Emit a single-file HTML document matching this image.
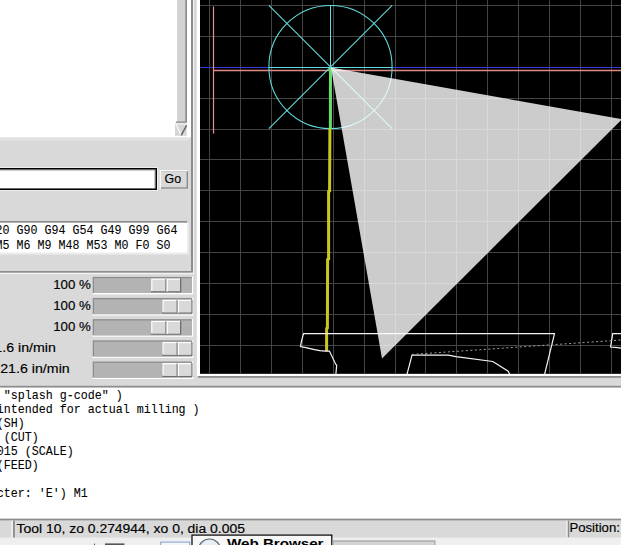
<!DOCTYPE html>
<html><head><meta charset="utf-8"><style>
html,body{margin:0;padding:0;width:621px;height:545px;overflow:hidden;background:#d9d9d9;}
svg{display:block;}
</style></head><body>
<svg width="621" height="545" viewBox="0 0 621 545">
<rect x="0" y="0" width="621" height="545" fill="#d9d9d9" />
<rect x="0" y="0" width="189" height="137.5" fill="#ffffff" />
<rect x="177" y="0" width="8.2" height="122" fill="#d3d3d3" />
<rect x="185.2" y="0" width="1.8" height="122" fill="#8c8c8c" />
<rect x="187" y="0" width="2" height="137.5" fill="#ffffff" />
<rect x="176" y="121.4" width="10.7" height="1.4" fill="#8c8c8c" />
<rect x="175" y="123" width="11.7" height="12.8" fill="#d6d6d6" />
<line x1="175.5" y1="124" x2="186.5" y2="124" stroke="#f8f8f8" stroke-width="1.0" />
<line x1="176" y1="124.2" x2="181.2" y2="135.2" stroke="#f8f8f8" stroke-width="1.2" />
<line x1="186.6" y1="125.3" x2="181.2" y2="135.3" stroke="#666" stroke-width="1.5" />
<rect x="189" y="0" width="2" height="137.5" fill="#ffffff" />
<rect x="0" y="137.5" width="189" height="3" fill="#e2e2e2" />
<rect x="191" y="0" width="2" height="272" fill="#8c8c8c" />
<rect x="193" y="0" width="1" height="274" fill="#f2f2f2" />
<rect x="0" y="271" width="193" height="1.8" fill="#8c8c8c" />
<rect x="0" y="272.8" width="194" height="1.4" fill="#f2f2f2" />
<rect x="196.8" y="0" width="3.2" height="376" fill="#ffffff" />
<rect x="197.2" y="373.8" width="423.8" height="2.2" fill="#ffffff" />
<rect x="198" y="376" width="423" height="1.8" fill="#8c8c8c" />
<rect x="0" y="385.8" width="621" height="1.9" fill="#8c8c8c" />
<rect x="0" y="167" width="158" height="24" fill="#efefef" />
<rect x="0" y="168" width="157" height="22" fill="#000" />
<rect x="0" y="169.3" width="155.7" height="19.3" fill="#9a9a9a" />
<rect x="0" y="170.5" width="154.5" height="17.6" fill="#ffffff" />
<rect x="159.7" y="170" width="28.3" height="18.7" fill="#f7f7f7" />
<rect x="161" y="171.3" width="27" height="17.4" fill="#8c8c8c" />
<rect x="161" y="171.3" width="25.6" height="16" fill="#d9d9d9" />
<text transform="translate(164.6,183.3) scale(1,1.0)" x="0" y="0" font-family="Liberation Sans" font-size="12.5" font-weight="normal" fill="#000" stroke="#000" stroke-width="0.15" text-anchor="start" textLength="16.6" lengthAdjust="spacingAndGlyphs" xml:space="preserve">Go</text>
<rect x="0" y="221" width="187" height="1.8" fill="#8c8c8c" />
<rect x="0" y="222.8" width="187" height="30" fill="#ffffff" />
<rect x="0" y="252.8" width="189" height="1.8" fill="#ececec" />
<rect x="187" y="222.8" width="2" height="30" fill="#ececec" />
<text transform="translate(-4.4,234.2) scale(1,1.1)" x="0" y="0" font-family="Liberation Mono" font-size="11.67" font-weight="normal" fill="#000" stroke="#000" stroke-width="0.08" text-anchor="start" xml:space="preserve">20 G90 G94 G54 G49 G99 G64</text>
<text transform="translate(-4.4,248.7) scale(1,1.1)" x="0" y="0" font-family="Liberation Mono" font-size="11.67" font-weight="normal" fill="#000" stroke="#000" stroke-width="0.08" text-anchor="start" xml:space="preserve">M5 M6 M9 M48 M53 M0 F0 S0</text>
<rect x="92.6" y="276.8" width="100.6" height="17.6" fill="#ffffff" />
<rect x="92.6" y="276.8" width="99.2" height="16.2" fill="#8c8c8c" />
<rect x="94" y="278.2" width="97.8" height="14.8" fill="#b3b3b3" />
<rect x="151.1" y="278.40000000000003" width="30.2" height="14.0" fill="#6e6e6e" />
<rect x="151.1" y="278.40000000000003" width="28.9" height="12.7" fill="#ffffff" />
<rect x="152.4" y="279.7" width="27.6" height="11.4" fill="#d9d9d9" />
<rect x="165.29999999999998" y="279.0" width="1.3" height="12.6" fill="#7a7a7a" />
<rect x="166.6" y="279.0" width="1.2" height="12.6" fill="#ffffff" />
<rect x="92.6" y="297.95" width="100.6" height="17.6" fill="#ffffff" />
<rect x="92.6" y="297.95" width="99.2" height="16.2" fill="#8c8c8c" />
<rect x="94" y="299.34999999999997" width="97.8" height="14.8" fill="#b3b3b3" />
<rect x="162.3" y="299.55" width="30.2" height="14.0" fill="#6e6e6e" />
<rect x="162.3" y="299.55" width="28.9" height="12.7" fill="#ffffff" />
<rect x="163.60000000000002" y="300.84999999999997" width="27.6" height="11.4" fill="#d9d9d9" />
<rect x="176.5" y="300.15" width="1.3" height="12.6" fill="#7a7a7a" />
<rect x="177.8" y="300.15" width="1.2" height="12.6" fill="#ffffff" />
<rect x="92.6" y="319.1" width="100.6" height="17.6" fill="#ffffff" />
<rect x="92.6" y="319.1" width="99.2" height="16.2" fill="#8c8c8c" />
<rect x="94" y="320.5" width="97.8" height="14.8" fill="#b3b3b3" />
<rect x="151.1" y="320.70000000000005" width="30.2" height="14.0" fill="#6e6e6e" />
<rect x="151.1" y="320.70000000000005" width="28.9" height="12.7" fill="#ffffff" />
<rect x="152.4" y="322.0" width="27.6" height="11.4" fill="#d9d9d9" />
<rect x="165.29999999999998" y="321.3" width="1.3" height="12.6" fill="#7a7a7a" />
<rect x="166.6" y="321.3" width="1.2" height="12.6" fill="#ffffff" />
<rect x="92.6" y="340.25" width="100.6" height="17.6" fill="#ffffff" />
<rect x="92.6" y="340.25" width="99.2" height="16.2" fill="#8c8c8c" />
<rect x="94" y="341.65" width="97.8" height="14.8" fill="#b3b3b3" />
<rect x="162.3" y="341.85" width="30.2" height="14.0" fill="#6e6e6e" />
<rect x="162.3" y="341.85" width="28.9" height="12.7" fill="#ffffff" />
<rect x="163.60000000000002" y="343.15" width="27.6" height="11.4" fill="#d9d9d9" />
<rect x="176.5" y="342.45" width="1.3" height="12.6" fill="#7a7a7a" />
<rect x="177.8" y="342.45" width="1.2" height="12.6" fill="#ffffff" />
<rect x="92.6" y="361.4" width="100.6" height="17.6" fill="#ffffff" />
<rect x="92.6" y="361.4" width="99.2" height="16.2" fill="#8c8c8c" />
<rect x="94" y="362.79999999999995" width="97.8" height="14.8" fill="#b3b3b3" />
<rect x="162.3" y="363.0" width="30.2" height="14.0" fill="#6e6e6e" />
<rect x="162.3" y="363.0" width="28.9" height="12.7" fill="#ffffff" />
<rect x="163.60000000000002" y="364.29999999999995" width="27.6" height="11.4" fill="#d9d9d9" />
<rect x="176.5" y="363.59999999999997" width="1.3" height="12.6" fill="#7a7a7a" />
<rect x="177.8" y="363.59999999999997" width="1.2" height="12.6" fill="#ffffff" />
<text transform="translate(90.8,289.2) scale(1,1.0)" x="0" y="0" font-family="Liberation Sans" font-size="12" font-weight="normal" fill="#000" stroke="#000" stroke-width="0.15" text-anchor="end" textLength="37.6" lengthAdjust="spacingAndGlyphs" xml:space="preserve">100 %</text>
<text transform="translate(90.8,309.9) scale(1,1.0)" x="0" y="0" font-family="Liberation Sans" font-size="12" font-weight="normal" fill="#000" stroke="#000" stroke-width="0.15" text-anchor="end" textLength="37.6" lengthAdjust="spacingAndGlyphs" xml:space="preserve">100 %</text>
<text transform="translate(90.8,331.1) scale(1,1.0)" x="0" y="0" font-family="Liberation Sans" font-size="12" font-weight="normal" fill="#000" stroke="#000" stroke-width="0.15" text-anchor="end" textLength="37.6" lengthAdjust="spacingAndGlyphs" xml:space="preserve">100 %</text>
<text transform="translate(-13.6,351.5) scale(1,1.0)" x="0" y="0" font-family="Liberation Sans" font-size="12" font-weight="normal" fill="#000" stroke="#000" stroke-width="0.15" text-anchor="start" textLength="69.5" lengthAdjust="spacingAndGlyphs" xml:space="preserve">21.6 in/min</text>
<text transform="translate(0.2,372.6) scale(1,1.0)" x="0" y="0" font-family="Liberation Sans" font-size="12" font-weight="normal" fill="#000" stroke="#000" stroke-width="0.15" text-anchor="start" textLength="69.5" lengthAdjust="spacingAndGlyphs" xml:space="preserve">21.6 in/min</text>
<rect x="0" y="387.7" width="621" height="131" fill="#ffffff" />
<text transform="translate(-3.2,399.4) scale(1,1.1)" x="0" y="0" font-family="Liberation Mono" font-size="11.67" font-weight="normal" fill="#000" stroke="#000" stroke-width="0.08" text-anchor="start" xml:space="preserve"> "splash g-code" )</text>
<text transform="translate(-3.2,413.34) scale(1,1.1)" x="0" y="0" font-family="Liberation Mono" font-size="11.67" font-weight="normal" fill="#000" stroke="#000" stroke-width="0.08" text-anchor="start" xml:space="preserve">intended for actual milling )</text>
<text transform="translate(-3.2,427.28) scale(1,1.1)" x="0" y="0" font-family="Liberation Mono" font-size="11.67" font-weight="normal" fill="#000" stroke="#000" stroke-width="0.08" text-anchor="start" xml:space="preserve">(SH)</text>
<text transform="translate(-3.2,441.21999999999997) scale(1,1.1)" x="0" y="0" font-family="Liberation Mono" font-size="11.67" font-weight="normal" fill="#000" stroke="#000" stroke-width="0.08" text-anchor="start" xml:space="preserve"> (CUT)</text>
<text transform="translate(-3.2,455.15999999999997) scale(1,1.1)" x="0" y="0" font-family="Liberation Mono" font-size="11.67" font-weight="normal" fill="#000" stroke="#000" stroke-width="0.08" text-anchor="start" xml:space="preserve">015 (SCALE)</text>
<text transform="translate(-3.2,469.09999999999997) scale(1,1.1)" x="0" y="0" font-family="Liberation Mono" font-size="11.67" font-weight="normal" fill="#000" stroke="#000" stroke-width="0.08" text-anchor="start" xml:space="preserve">(FEED)</text>
<text transform="translate(-3.2,496.97999999999996) scale(1,1.1)" x="0" y="0" font-family="Liberation Mono" font-size="11.67" font-weight="normal" fill="#000" stroke="#000" stroke-width="0.08" text-anchor="start" xml:space="preserve">cter: 'E') M1</text>
<rect x="0" y="518.7" width="621" height="1.9" fill="#8c8c8c" />
<rect x="0" y="520.6" width="621" height="17" fill="#d9d9d9" />
<rect x="11.6" y="520.6" width="1.3" height="18" fill="#ffffff" />
<rect x="12.9" y="520.6" width="1.9" height="18" fill="#8c8c8c" />
<text transform="translate(16.6,532.6) scale(1,1.0)" x="0" y="0" font-family="Liberation Sans" font-size="12" font-weight="normal" fill="#000" stroke="#000" stroke-width="0.15" text-anchor="start" textLength="228.3" lengthAdjust="spacingAndGlyphs" xml:space="preserve">Tool 10, zo 0.274944, xo 0, dia 0.005</text>
<rect x="566.5" y="520.6" width="1.2" height="17" fill="#ffffff" />
<rect x="567.7" y="520.6" width="1.6" height="17" fill="#8c8c8c" />
<text transform="translate(569.4,532.2) scale(1,1.0)" x="0" y="0" font-family="Liberation Sans" font-size="12" font-weight="normal" fill="#000" stroke="#000" stroke-width="0.15" text-anchor="start" textLength="50.5" lengthAdjust="spacingAndGlyphs" xml:space="preserve">Position:</text>
<rect x="0" y="537.6" width="621" height="7.4" fill="#efefef" />
<rect x="105" y="543.4" width="19.4" height="1.6" fill="#555" />
<rect x="94" y="543.6" width="1" height="1.4" fill="#555" />
<rect x="160.2" y="541.6" width="30" height="3.4" fill="#7fa0d0" />
<rect x="161.2" y="542.6" width="28" height="2.4" fill="#f4f4f4" />
<rect x="191.4" y="534.5" width="141" height="10.5" fill="#000" />
<rect x="192.6" y="535.7" width="138.6" height="9.3" fill="#f7f7f7" />
<circle cx="209.5" cy="550" r="11" fill="#e8eef5" stroke="#606870" stroke-width="1.2"/>
<text transform="translate(227,548.2) scale(1,1.0)" x="0" y="0" font-family="Liberation Sans" font-size="12.5" font-weight="bold" fill="#000" text-anchor="start" textLength="96.5" lengthAdjust="spacingAndGlyphs" xml:space="preserve">Web Browser</text>
<rect x="332.4" y="540.4" width="103" height="4.6" fill="#9a9a9a" />
<rect x="333.4" y="541.5" width="101" height="3.5" fill="#d4d4d4" />
<svg x="200" y="0" width="421" height="374" viewBox="200 0 421 374" overflow="hidden"><rect x="200" y="0" width="421" height="373.8" fill="#000"/><line x1="209.5" y1="0" x2="209.5" y2="373.8" stroke="#444444" stroke-width="1"/><line x1="240.5" y1="0" x2="240.5" y2="373.8" stroke="#444444" stroke-width="1"/><line x1="271.5" y1="0" x2="271.5" y2="373.8" stroke="#444444" stroke-width="1"/><line x1="302.5" y1="0" x2="302.5" y2="373.8" stroke="#444444" stroke-width="1"/><line x1="333.5" y1="0" x2="333.5" y2="373.8" stroke="#444444" stroke-width="1"/><line x1="364.5" y1="0" x2="364.5" y2="373.8" stroke="#444444" stroke-width="1"/><line x1="395.5" y1="0" x2="395.5" y2="373.8" stroke="#444444" stroke-width="1"/><line x1="425.5" y1="0" x2="425.5" y2="373.8" stroke="#444444" stroke-width="1"/><line x1="456.5" y1="0" x2="456.5" y2="373.8" stroke="#444444" stroke-width="1"/><line x1="487.5" y1="0" x2="487.5" y2="373.8" stroke="#444444" stroke-width="1"/><line x1="518.5" y1="0" x2="518.5" y2="373.8" stroke="#444444" stroke-width="1"/><line x1="549.5" y1="0" x2="549.5" y2="373.8" stroke="#444444" stroke-width="1"/><line x1="580.5" y1="0" x2="580.5" y2="373.8" stroke="#444444" stroke-width="1"/><line x1="611.5" y1="0" x2="611.5" y2="373.8" stroke="#444444" stroke-width="1"/><line x1="200" y1="5.5" x2="621" y2="5.5" stroke="#444444" stroke-width="1"/><line x1="200" y1="36.5" x2="621" y2="36.5" stroke="#444444" stroke-width="1"/><line x1="200" y1="67.5" x2="621" y2="67.5" stroke="#444444" stroke-width="1"/><line x1="200" y1="98.5" x2="621" y2="98.5" stroke="#444444" stroke-width="1"/><line x1="200" y1="129.5" x2="621" y2="129.5" stroke="#444444" stroke-width="1"/><line x1="200" y1="159.5" x2="621" y2="159.5" stroke="#444444" stroke-width="1"/><line x1="200" y1="190.5" x2="621" y2="190.5" stroke="#444444" stroke-width="1"/><line x1="200" y1="221.5" x2="621" y2="221.5" stroke="#444444" stroke-width="1"/><line x1="200" y1="252.5" x2="621" y2="252.5" stroke="#444444" stroke-width="1"/><line x1="200" y1="283.5" x2="621" y2="283.5" stroke="#444444" stroke-width="1"/><line x1="200" y1="314.5" x2="621" y2="314.5" stroke="#444444" stroke-width="1"/><line x1="200" y1="345.5" x2="621" y2="345.5" stroke="#444444" stroke-width="1"/><line x1="200" y1="67.5" x2="621" y2="67.5" stroke="#3a3ae0" stroke-width="1.2"/><line x1="213.5" y1="70.5" x2="621" y2="70.5" stroke="#e08888" stroke-width="1.3"/><line x1="213.5" y1="6.5" x2="213.5" y2="133.6" stroke="#e89090" stroke-width="1.2"/><circle cx="330.5" cy="67" r="61.6" fill="none" stroke="#60dede" stroke-width="1.05"/><line x1="268.9" y1="67.5" x2="392.1" y2="67.5" stroke="#60dede" stroke-width="1.05"/><line x1="330.5" y1="5" x2="330.5" y2="128.6" stroke="#60dede" stroke-width="1.05"/><line x1="268.9" y1="5.4" x2="392.1" y2="128.6" stroke="#60dede" stroke-width="1.05"/><line x1="392.1" y1="5.4" x2="268.9" y2="128.6" stroke="#60dede" stroke-width="1.05"/><line x1="330.5" y1="68" x2="330.4" y2="128.3" stroke="#66dd66" stroke-width="3"/><polyline points="329.9,128.3 329.6,191 328.6,191.5 328.6,259 327.6,259.5 327.4,328 326.6,328.5 326.6,351.3" fill="none" stroke="#c8c820" stroke-width="3"/><polyline points="335.8,375 336.7,365 335.8,364.4 329.4,351.1 325.3,351.1 319.8,350.7 313.3,349.3 306.9,347.9 300.5,346.6 301.4,341.5 303.5,333.5 554.5,333.7 544.4,375" stroke="#f4f4f4" stroke-width="1.2" fill="none"/><polyline points="406.8,375 412,355.2 448.3,355.2 456,356.7 492.8,361.5 508.2,371.2 510,375" stroke="#f4f4f4" stroke-width="1.2" fill="none"/><polyline points="622,333.6 612.7,333.6 610.6,347 617.6,347.7 622,348.2" stroke="#f4f4f4" stroke-width="1.2" fill="none"/><line x1="412" y1="354.4" x2="621" y2="340" stroke="#a0a0a0" stroke-width="1" stroke-dasharray="2,2.5"/><polygon points="331,67.5 622,119.2 382,358.5" fill="#ffffff" fill-opacity="0.8"/></svg>
</svg>
</body></html>
